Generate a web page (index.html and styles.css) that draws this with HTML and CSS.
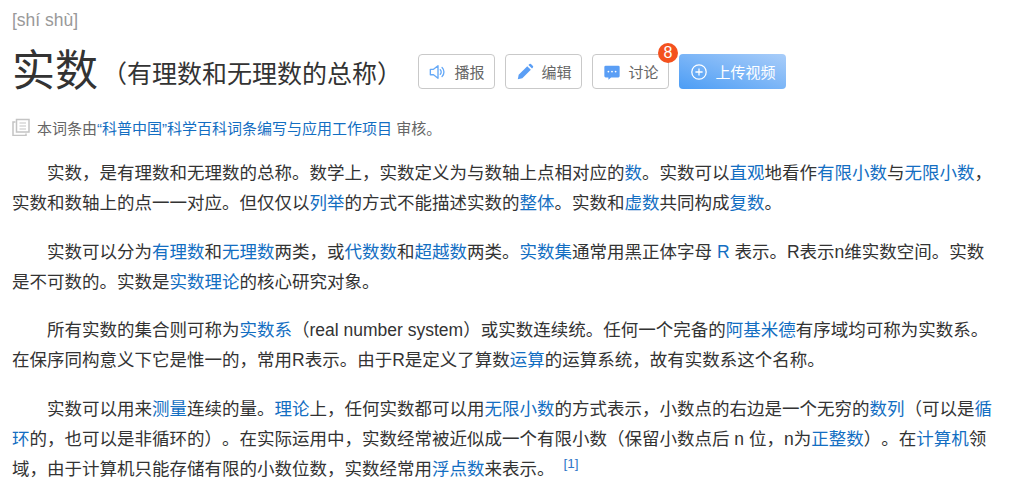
FILE: index.html
```html
<!DOCTYPE html>
<html lang="zh-CN">
<head>
<meta charset="utf-8">
<title>实数</title>
<link rel="stylesheet" href="styles.css">
</head>
<body>
<div class="pinyin">[shí shù]</div>
<div class="head">
  <h1 class="title">实数</h1>
  <h2 class="subtitle">（有理数和无理数的总称）</h2>
  <div class="actions">
    <a class="btn">
      <svg class="ico" viewBox="0 0 20 20" width="20" height="20"><path d="M1.500 7h3.500l5-4v14l-5-4H1.500z" fill="none" stroke="#66a9f7" stroke-width="1.500" stroke-linejoin="round"/><path d="M12.500 7.500a3.500 3.500 0 0 1 0 5M14.500 5a7 7 0 0 1 0 10" fill="none" stroke="#66a9f7" stroke-width="1.500" stroke-linecap="round"/></svg>
      播报
    </a>
    <a class="btn">
      <svg class="ico" viewBox="0 0 20 20" width="20" height="20"><path d="M2 18l1-5L12.500 3.500l4 4L7 17z" fill="#5a9ef5"/><path d="M13.800 2.200l1.200-1a1.200 1.200 0 0 1 1.600 0l2.200 2.200a1.200 1.200 0 0 1 0 1.600l-1 1.200z" fill="#5a9ef5"/></svg>
      编辑
    </a>
    <a class="btn">
      <svg class="ico" viewBox="0 0 20 20" width="20" height="20"><path d="M3 3h14a1.500 1.500 0 0 1 1.500 1.500v10A1.500 1.500 0 0 1 17 16H9l-3 2.500V16H3a1.500 1.500 0 0 1-1.500-1.500v-10A1.500 1.500 0 0 1 3 3z" fill="#5a9ef5"/><circle cx="6" cy="9.500" r="1" fill="#fff"/><circle cx="10" cy="9.500" r="1" fill="#fff"/><circle cx="14" cy="9.500" r="1" fill="#fff"/></svg>
      讨论
      <span class="badge">8</span>
    </a>
    <a class="btn btn-primary">
      <svg class="ico" viewBox="0 0 20 20" width="20" height="20"><circle cx="10" cy="10" r="8" fill="none" stroke="#fff" stroke-width="1.400"/><path d="M10 6v8M6 10h8" stroke="#fff" stroke-width="1.400"/></svg>
      上传视频
    </a>
  </div>
</div>
<div class="audit">
  <svg class="audit-ico" viewBox="0 0 18 18" width="18" height="18"><path d="M4.500 1.500h12.500v12.500H4.500z" fill="#fff" stroke="#c4c4c4" stroke-width="1.500"/><path d="M3.500 4H1v13.500h13v-2" fill="none" stroke="#c4c4c4" stroke-width="1.500"/><path d="M7.500 5h6.500M7.500 8h6.500M7.500 11h6.500" stroke="#c4c4c4" stroke-width="1.200"/></svg>
  <span>本词条由<a class="link">“科普中国”</a><a class="link">科学百科词条编写与应用工作项目</a> 审核。</span>
</div>
<p class="para">实数，是有理数和无理数的总称。数学上，实数定义为与数轴上点相对应的<a class="link">数</a>。实数可以<a class="link">直观</a>地看作<a class="link">有限小数</a>与<a class="link">无限小数</a>，实数和数轴上的点一一对应。但仅仅以<a class="link">列举</a>的方式不能描述实数的<a class="link">整体</a>。实数和<a class="link">虚数</a>共同构成<a class="link">复数</a>。</p>
<p class="para">实数可以分为<a class="link">有理数</a>和<a class="link">无理数</a>两类，或<a class="link">代数数</a>和<a class="link">超越数</a>两类。<a class="link">实数集</a>通常用黑正体字母 <a class="link">R</a> 表示。R表示n维实数空间。实数是不可数的。实数是<a class="link">实数理论</a>的核心研究对象。</p>
<p class="para">所有实数的集合则可称为<a class="link">实数系</a>（real number system）或实数连续统。任何一个完备的<a class="link">阿基米德</a>有序域均可称为实数系。在保序同构意义下它是惟一的，常用R表示。由于R是定义了算数<a class="link">运算</a>的运算系统，故有实数系这个名称。</p>
<p class="para">实数可以用来<a class="link">测量</a>连续的量。<a class="link">理论</a>上，任何实数都可以用<a class="link">无限小数</a>的方式表示，小数点的右边是一个无穷的<a class="link">数列</a>（可以是<a class="link">循环</a>的，也可以是非循环的）。在实际运用中，实数经常被近似成一个有限小数（保留小数点后 n 位，n为<a class="link">正整数</a>）。在<a class="link">计算机</a>领域，由于计算机只能存储有限的小数位数，实数经常用<a class="link">浮点数</a>来表示。 <sup class="ref">[1]</sup></p>
</body>
</html>
```
FILE: styles.css
```css
html, body {
  margin: 0;
  padding: 0;
  background: #fff;
}
body {
  width: 1024px;
  height: 494px;
  overflow: hidden;
  box-sizing: border-box;
  padding: 8px 29px 0 12px;
  font-family: "Liberation Sans", "Noto Sans CJK SC", sans-serif;
  color: #333;
  text-spacing-trim: space-all;
}
.pinyin {
  font-size: 17.500px;
  line-height: 24px;
  color: #999;
}
.head {
  display: flex;
  align-items: flex-start;
  margin-top: 9px;
  height: 60px;
}
.title {
  margin: 0;
  font-size: 43px;
  line-height: 60px;
  font-weight: 400;
  color: #333;
}
.subtitle {
  margin: 10px 0 0 4px;
  font-size: 25px;
  line-height: 46px;
  font-weight: 400;
  color: #333;
}
.actions {
  display: flex;
  gap: 10px;
  margin: 13px 0 0 16px;
}
.btn {
  position: relative;
  display: flex;
  align-items: center;
  justify-content: center;
  gap: 8px;
  box-sizing: border-box;
  width: 77px;
  height: 35px;
  border: 1px solid #c9c9c9;
  border-radius: 4px;
  font-size: 15px;
  color: #666;
}
.btn-primary {
  width: 107px;
  border: 0;
  color: #fff;
  background: linear-gradient(to bottom left, #a9cdf9, #4c9df5);
}
.ico {
  width: 18px;
  height: 18px;
  flex: none;
}
.badge {
  position: absolute;
  top: -12px;
  right: -10px;
  width: 20px;
  height: 20px;
  border-radius: 50%;
  background: #f4511e;
  color: #fff;
  font-size: 16px;
  line-height: 20px;
  text-align: center;
}
.audit {
  display: flex;
  align-items: center;
  gap: 7px;
  margin-top: 15px;
  margin-bottom: 19.750px;
  height: 22px;
  font-size: 15px;
  color: #666;
}
.audit-ico {
  width: 18px;
  height: 18px;
  flex: none;
}
.link {
  color: #136ec2;
}
.para {
  margin: 18.750px 0;
  font-size: 17.500px;
  line-height: 30px;
  text-indent: 2em;
}
.ref {
  font-size: 13.500px;
  line-height: 0;
  color: #2f76c8;
  margin-left: 4px;
}
```
